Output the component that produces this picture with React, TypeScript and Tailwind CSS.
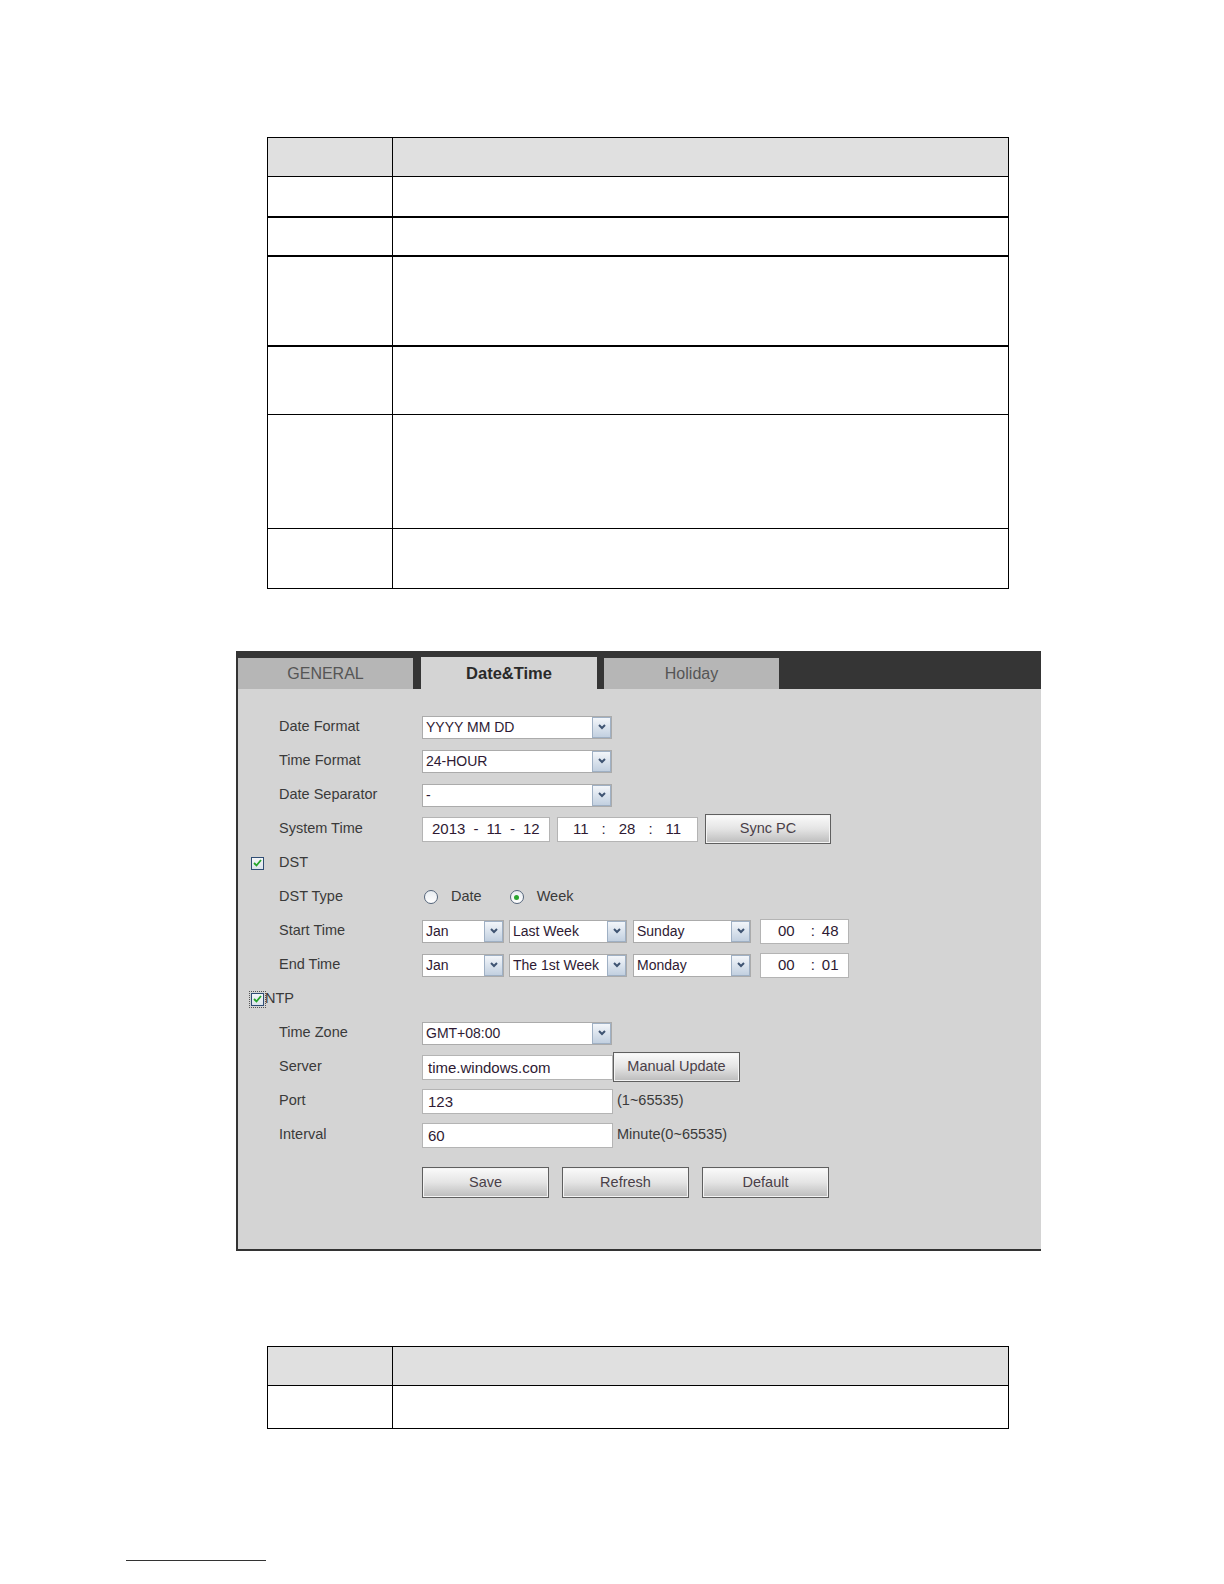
import React from "react";

const labelCls = "text-[14.5px] text-[#3a3a3a]";

function Chevron() {
  return (
    <svg width="10" height="8" viewBox="0 0 10 8">
      <path d="M2 2 L5 5 L8 2" fill="none" stroke="#3f5472" strokeWidth="2" />
    </svg>
  );
}

function Select({ value, w }: { value: string; w: string }) {
  return (
    <div className={`flex h-[23px] items-stretch border border-[#ababab] bg-white ${w}`}>
      <div className="flex-1 overflow-hidden whitespace-nowrap pl-[3px] text-[14px] leading-[21px] text-[#2e1a33]">
        {value}
      </div>
      <div className="flex w-[19px] items-center justify-center border border-[#9fb0c4] bg-linear-to-b from-[#f3f6fa] to-[#c2d0e0]">
        <Chevron />
      </div>
    </div>
  );
}

function Input({ value, w }: { value: string; w: string }) {
  return (
    <div className={`h-[25px] border border-[#b4b4b4] bg-white pl-[5px] text-[15px] leading-[23px] text-[#2e1a33] ${w}`}>
      {value}
    </div>
  );
}

function Btn({ label, w, h }: { label: string; w: string; h: string }) {
  return (
    <div
      className={`flex items-center justify-center border border-[#5f5f5f] bg-linear-to-b from-[#fbfbfb] via-[#e4e4e4] to-[#bcbcbc] text-[14.5px] text-[#4a3f48] shadow-[inset_0_0_0_1px_#f4f4f4] ${w} ${h}`}
    >
      {label}
    </div>
  );
}

function Check({ focus }: { focus?: boolean }) {
  return (
    <div
      className={`flex h-[15px] w-[15px] items-center justify-center ${
        focus ? "outline outline-1 outline-dotted outline-[#555]" : ""
      }`}
    >
      <div className="flex h-[13px] w-[13px] items-center justify-center border border-[#2f4d74] bg-linear-to-b from-[#f4f6f8] to-[#dce4ec]">
        <svg width="9" height="8" viewBox="0 0 9 8">
          <path d="M1 4 L3.5 6.5 L8 1" fill="none" stroke="#25a52a" strokeWidth="1.8" />
        </svg>
      </div>
    </div>
  );
}

function Radio({ on }: { on?: boolean }) {
  return (
    <div className="flex h-[14px] w-[14px] items-center justify-center rounded-full border border-[#55657b] bg-linear-to-b from-[#e8ecf0] to-[#ffffff]">
      {on && <div className="h-[5px] w-[5px] rounded-full bg-[#2aa52f]" />}
    </div>
  );
}

function Row({ label, children }: { label: string; children?: React.ReactNode }) {
  return (
    <div className="flex h-[34px] items-center pl-[41px]">
      <div className={`w-[143px] ${labelCls}`}>{label}</div>
      <div className="flex items-center">{children}</div>
    </div>
  );
}

function TimeBox({ a, b }: { a: string; b: string }) {
  return (
    <div className="ml-[9px] flex h-[25px] w-[89px] items-center border border-[#b4b4b4] bg-white pl-[17px] text-[15px] text-[#2e1a33]">
      <span>{a}</span>
      <span className="ml-[16px]">:</span>
      <span className="ml-[7px]">{b}</span>
    </div>
  );
}

function Table({ rows }: { rows: { h: string; thick?: boolean }[] }) {
  return (
    <div className="w-[742px] border border-black">
      <div className="flex h-[38px] bg-[#e0e0e0]">
        <div className="w-[125px] border-r border-black" />
        <div className="flex-1" />
      </div>
      {rows.map((r, i) => (
        <div
          key={i}
          className={`flex border-black ${r.thick ? "border-t-2" : "border-t"} ${r.h}`}
        >
          <div className="w-[125px] border-r border-black" />
          <div className="flex-1" />
        </div>
      ))}
    </div>
  );
}

export default function App() {
  return (
    <div className="min-h-[1584px] w-[1224px] bg-white pt-[137px] font-['Liberation_Sans',Arial,sans-serif]">
      {/* Top table */}
      <div className="ml-[267px]">
        <Table
          rows={[
            { h: "h-[40px]" },
            { h: "h-[39px]", thick: true },
            { h: "h-[90px]", thick: true },
            { h: "h-[69px]", thick: true },
            { h: "h-[114px]" },
            { h: "h-[60px]" },
          ]}
        />
      </div>

      {/* Settings panel */}
      <div className="ml-[236px] mt-[62px] flex h-[600px] w-[805px] flex-col border-b-2 border-l-2 border-[#333] bg-[#d4d4d4]">
        <div className="flex h-[38px] shrink-0 items-end bg-[#353535]">
          <div className="flex h-[31px] w-[175px] items-center justify-center bg-[#b6b6b6] text-[16px] text-[#555]">
            GENERAL
          </div>
          <div className="ml-[8px] flex h-[32px] w-[176px] items-center justify-center bg-[#d4d4d4] text-[16.5px] font-bold text-[#2a2a2a]">
            Date&amp;Time
          </div>
          <div className="ml-[7px] flex h-[31px] w-[175px] items-center justify-center bg-[#b6b6b6] text-[16px] text-[#555]">
            Holiday
          </div>
        </div>

        <div className="pt-[21px]">
          <Row label="Date Format">
            <Select value="YYYY MM DD" w="w-[190px]" />
          </Row>
          <Row label="Time Format">
            <Select value="24-HOUR" w="w-[190px]" />
          </Row>
          <Row label="Date Separator">
            <Select value="-" w="w-[190px]" />
          </Row>
          <Row label="System Time">
            <div className="flex h-[25px] w-[128px] items-center gap-[8px] border border-[#b4b4b4] bg-white pl-[9px] text-[15px] text-[#2e1a33]">
              <span>2013</span>
              <span>-</span>
              <span>11</span>
              <span>-</span>
              <span>12</span>
            </div>
            <div className="ml-[7px] flex h-[25px] w-[141px] items-center gap-[13px] border border-[#b4b4b4] bg-white pl-[15px] text-[15px] text-[#2e1a33]">
              <span>11</span>
              <span>:</span>
              <span>28</span>
              <span>:</span>
              <span>11</span>
            </div>
            <div className="ml-[7px]">
              <Btn label="Sync PC" w="w-[126px]" h="h-[30px]" />
            </div>
          </Row>

          <div className="flex h-[34px] items-center pl-[12px]">
            <Check />
            <span className={`ml-[14px] ${labelCls}`}>DST</span>
          </div>

          <Row label="DST Type">
            <div className="ml-[2px]">
              <Radio />
            </div>
            <span className={`ml-[13px] ${labelCls}`}>Date</span>
            <div className="ml-[28px]">
              <Radio on />
            </div>
            <span className={`ml-[13px] ${labelCls}`}>Week</span>
          </Row>
          <Row label="Start Time">
            <Select value="Jan" w="w-[82px]" />
            <div className="ml-[5px]">
              <Select value="Last Week" w="w-[118px]" />
            </div>
            <div className="ml-[6px]">
              <Select value="Sunday" w="w-[118px]" />
            </div>
            <TimeBox a="00" b="48" />
          </Row>
          <Row label="End Time">
            <Select value="Jan" w="w-[82px]" />
            <div className="ml-[5px]">
              <Select value="The 1st Week" w="w-[118px]" />
            </div>
            <div className="ml-[6px]">
              <Select value="Monday" w="w-[118px]" />
            </div>
            <TimeBox a="00" b="01" />
          </Row>

          <div className="flex h-[34px] items-center pl-[12px]">
            <Check focus />
            <span className={labelCls}>NTP</span>
          </div>

          <Row label="Time Zone">
            <Select value="GMT+08:00" w="w-[190px]" />
          </Row>
          <Row label="Server">
            <Input value="time.windows.com" w="w-[191px]" />
            <Btn label="Manual Update" w="w-[127px]" h="h-[30px]" />
          </Row>
          <Row label="Port">
            <Input value="123" w="w-[191px]" />
            <span className="ml-[4px] text-[14.5px] text-[#3a3a3a]">(1~65535)</span>
          </Row>
          <Row label="Interval">
            <Input value="60" w="w-[191px]" />
            <span className="ml-[4px] text-[14.5px] text-[#3a3a3a]">Minute(0~65535)</span>
          </Row>

          <div className="mt-[15px] flex gap-[13px] pl-[184px]">
            <Btn label="Save" w="w-[127px]" h="h-[31px]" />
            <Btn label="Refresh" w="w-[127px]" h="h-[31px]" />
            <Btn label="Default" w="w-[127px]" h="h-[31px]" />
          </div>
        </div>
      </div>

      {/* Bottom table */}
      <div className="ml-[267px] mt-[95px]">
        <Table rows={[{ h: "h-[43px]" }]} />
      </div>

      <div className="ml-[126px] mt-[131px] h-px w-[140px] bg-[#333]" />
    </div>
  );
}
